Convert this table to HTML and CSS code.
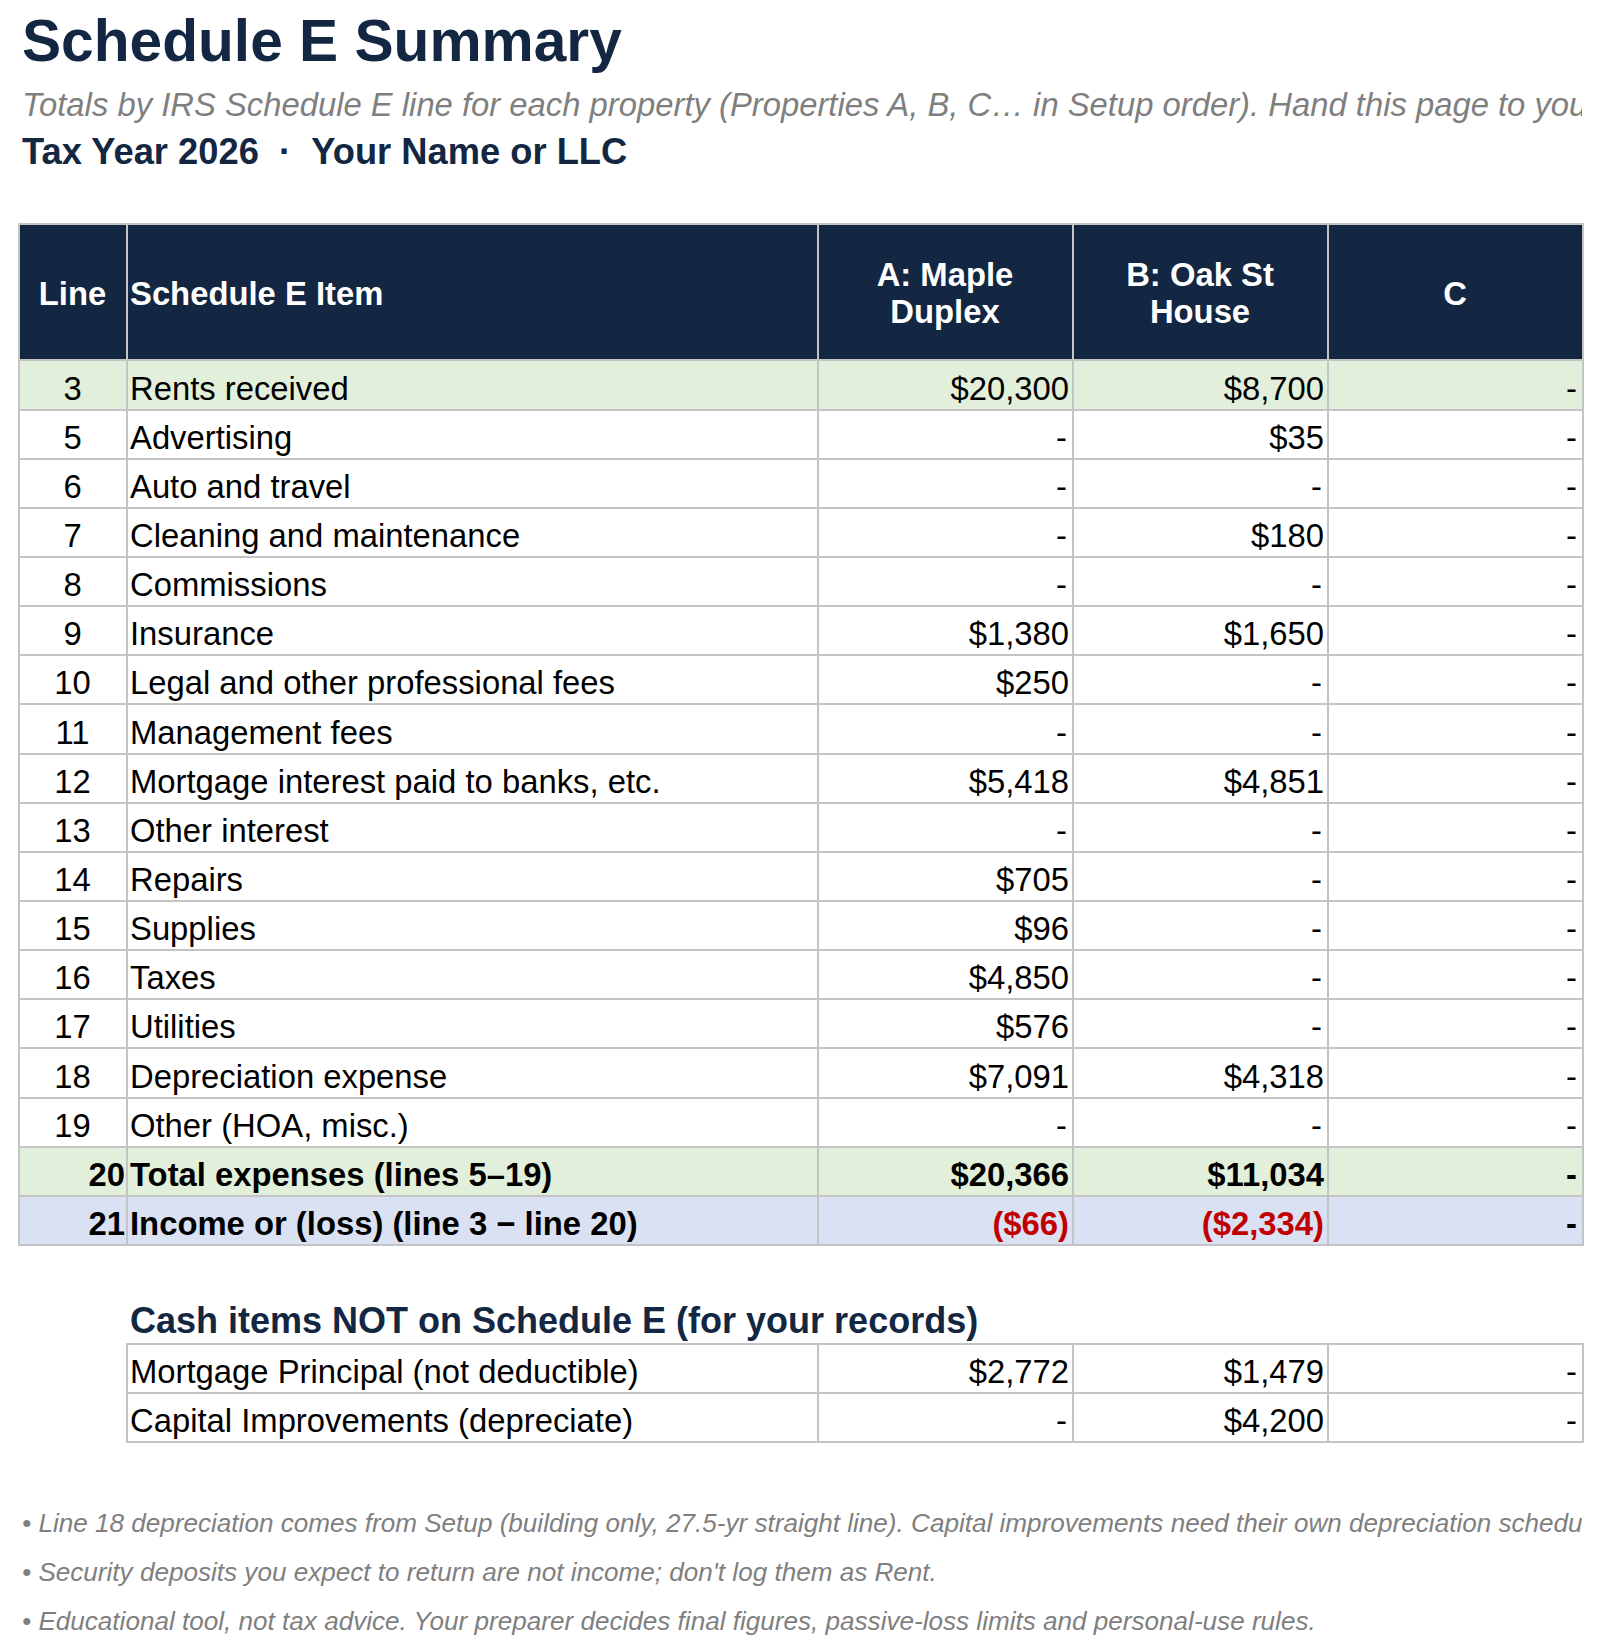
FILE: index.html
```html
<!DOCTYPE html>
<html lang="en">
<head>
<meta charset="utf-8">
<title>Schedule E Summary</title>
<link rel="stylesheet" href="styles.css">
</head>
<body>
<div class="sheet">
  <header class="doc-head">
    <h1 class="title">Schedule E Summary</h1>
    <p class="subtitle">Totals by IRS Schedule E line for each property (Properties A, B, C… in Setup order). Hand this page to your tax preparer.</p>
    <p class="meta">Tax Year 2026&nbsp;&nbsp;·&nbsp;&nbsp;Your Name or LLC</p>
  </header>

  <table class="grid sched">
    <colgroup><col class="c-line"><col class="c-item"><col class="c-prop"><col class="c-prop"><col class="c-prop"></colgroup>
    <thead>
      <tr><th>Line</th><th class="h-item">Schedule E Item</th><th>A: Maple<br>Duplex</th><th>B: Oak St<br>House</th><th>C</th></tr>
    </thead>
    <tbody>
      <tr class="income"><td class="ln">3</td><td>Rents received</td><td class="amt">$20,300</td><td class="amt">$8,700</td><td class="amt"><span class="nil">-</span></td></tr>
      <tr><td class="ln">5</td><td>Advertising</td><td class="amt"><span class="nil">-</span></td><td class="amt">$35</td><td class="amt"><span class="nil">-</span></td></tr>
      <tr><td class="ln">6</td><td>Auto and travel</td><td class="amt"><span class="nil">-</span></td><td class="amt"><span class="nil">-</span></td><td class="amt"><span class="nil">-</span></td></tr>
      <tr><td class="ln">7</td><td>Cleaning and maintenance</td><td class="amt"><span class="nil">-</span></td><td class="amt">$180</td><td class="amt"><span class="nil">-</span></td></tr>
      <tr><td class="ln">8</td><td>Commissions</td><td class="amt"><span class="nil">-</span></td><td class="amt"><span class="nil">-</span></td><td class="amt"><span class="nil">-</span></td></tr>
      <tr><td class="ln">9</td><td>Insurance</td><td class="amt">$1,380</td><td class="amt">$1,650</td><td class="amt"><span class="nil">-</span></td></tr>
      <tr><td class="ln">10</td><td>Legal and other professional fees</td><td class="amt">$250</td><td class="amt"><span class="nil">-</span></td><td class="amt"><span class="nil">-</span></td></tr>
      <tr><td class="ln">11</td><td>Management fees</td><td class="amt"><span class="nil">-</span></td><td class="amt"><span class="nil">-</span></td><td class="amt"><span class="nil">-</span></td></tr>
      <tr><td class="ln">12</td><td>Mortgage interest paid to banks, etc.</td><td class="amt">$5,418</td><td class="amt">$4,851</td><td class="amt"><span class="nil">-</span></td></tr>
      <tr><td class="ln">13</td><td>Other interest</td><td class="amt"><span class="nil">-</span></td><td class="amt"><span class="nil">-</span></td><td class="amt"><span class="nil">-</span></td></tr>
      <tr><td class="ln">14</td><td>Repairs</td><td class="amt">$705</td><td class="amt"><span class="nil">-</span></td><td class="amt"><span class="nil">-</span></td></tr>
      <tr><td class="ln">15</td><td>Supplies</td><td class="amt">$96</td><td class="amt"><span class="nil">-</span></td><td class="amt"><span class="nil">-</span></td></tr>
      <tr><td class="ln">16</td><td>Taxes</td><td class="amt">$4,850</td><td class="amt"><span class="nil">-</span></td><td class="amt"><span class="nil">-</span></td></tr>
      <tr><td class="ln">17</td><td>Utilities</td><td class="amt">$576</td><td class="amt"><span class="nil">-</span></td><td class="amt"><span class="nil">-</span></td></tr>
      <tr><td class="ln">18</td><td>Depreciation expense</td><td class="amt">$7,091</td><td class="amt">$4,318</td><td class="amt"><span class="nil">-</span></td></tr>
      <tr><td class="ln">19</td><td>Other (HOA, misc.)</td><td class="amt"><span class="nil">-</span></td><td class="amt"><span class="nil">-</span></td><td class="amt"><span class="nil">-</span></td></tr>
      <tr class="total"><td class="ln">20</td><td>Total expenses (lines 5–19)</td><td class="amt">$20,366</td><td class="amt">$11,034</td><td class="amt"><span class="nil">-</span></td></tr>
      <tr class="net"><td class="ln">21</td><td>Income or (loss) (line 3 − line 20)</td><td class="amt neg">($66)</td><td class="amt neg">($2,334)</td><td class="amt"><span class="nil">-</span></td></tr>
    </tbody>
  </table>

  <section class="cash">
    <h2 class="cash-title">Cash items NOT on Schedule E (for your records)</h2>
    <table class="grid cash-table">
      <colgroup><col class="c-item"><col class="c-prop"><col class="c-prop"><col class="c-prop"></colgroup>
      <tbody>
        <tr><td>Mortgage Principal (not deductible)</td><td class="amt">$2,772</td><td class="amt">$1,479</td><td class="amt"><span class="nil">-</span></td></tr>
        <tr><td>Capital Improvements (depreciate)</td><td class="amt"><span class="nil">-</span></td><td class="amt">$4,200</td><td class="amt"><span class="nil">-</span></td></tr>
      </tbody>
    </table>
  </section>

  <ul class="notes">
    <li>• Line 18 depreciation comes from Setup (building only, 27.5-yr straight line). Capital improvements need their own depreciation schedule.</li>
    <li>• Security deposits you expect to return are not income; don't log them as Rent.</li>
    <li>• Educational tool, not tax advice. Your preparer decides final figures, passive-loss limits and personal-use rules.</li>
  </ul>
</div>
</body>
</html>
```

FILE: styles.css
```css
* { box-sizing: border-box; }

body {
  margin: 0;
  background: #ffffff;
  color: #000000;
  font-family: "Liberation Sans", Arial, sans-serif;
}

.sheet {
  margin-left: 18px;
  width: 1564px;
}

.doc-head { padding-top: 8px; }

.title {
  margin: 0;
  padding-left: 4px;
  font-size: 58.67px;
  line-height: 66px;
  font-weight: 700;
  color: #132743;
}

.subtitle {
  margin: 11px 0 0;
  padding-left: 4px;
  font-size: 32.8px;
  line-height: 40px;
  font-style: italic;
  color: #7f7f7f;
  white-space: nowrap;
  overflow: hidden;
}

.meta {
  margin: 6px 0 0;
  padding-left: 4px;
  font-size: 36.3px;
  line-height: 42px;
  font-weight: 700;
  color: #132743;
  white-space: nowrap;
}

/* grid tables */
.grid {
  border-collapse: collapse;
  table-layout: fixed;
}
.grid td,
.grid th {
  border: 2px solid #c4c4c4;
  padding: 0 3px 2px 2px;
  font-size: 32.8px;
  line-height: 36px;
  font-weight: 400;
  vertical-align: bottom;
  white-space: nowrap;
}
.grid tbody tr { height: 49.155px; }

.c-line { width: 108px; }
.c-item { width: 691px; }
.c-prop { width: 255px; }

.sched {
  width: 1564px;
  margin-top: 50px;
}
.sched thead tr { height: 136.4px; }
.sched th {
  padding: 2px 3px 0 2px;
  background: #132743;
  color: #ffffff;
  font-weight: 700;
  text-align: center;
  vertical-align: middle;
  line-height: 37px;
}
.sched th.h-item { text-align: left; }

.ln { text-align: center; }
.amt { text-align: right; }
.nil { margin-right: 2px; }

.income td,
.total td { background: #e2efda; }
.total td,
.net td { font-weight: 700; }
.net td { background: #d9e1f2; }
.total .ln,
.net .ln {
  text-align: right;
  padding-right: 1px;
}
.neg { color: #c00000; }

/* cash section */
.cash { margin-left: 108px; }
.cash-title {
  margin: 48.155px 0 0;
  height: 49.155px;
  padding: 5.5px 0 0 4px;
  font-size: 36px;
  line-height: 42px;
  font-weight: 700;
  color: #132743;
  white-space: nowrap;
}
.cash-table { width: 1456px; }

/* notes */
.notes {
  list-style: none;
  margin: 49.155px 0 0;
  padding: 0;
}
.notes li {
  height: 49.155px;
  padding: 15.25px 0 0 4px;
  font-size: 26.1px;
  line-height: 30px;
  font-style: italic;
  color: #7f7f7f;
  white-space: nowrap;
  overflow: hidden;
}
```
